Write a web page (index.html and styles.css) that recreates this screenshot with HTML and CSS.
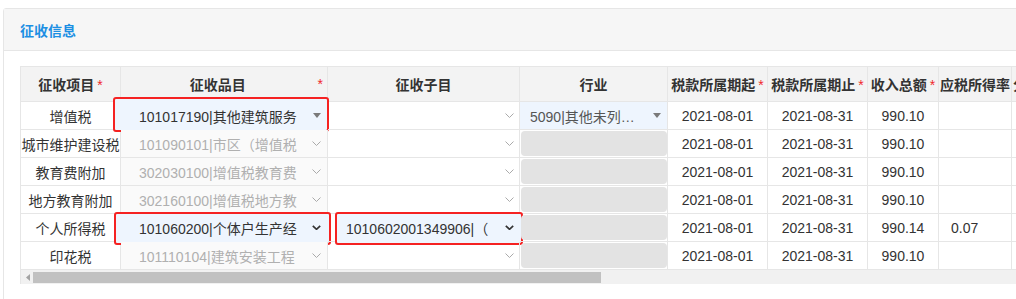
FILE: index.html
```html
<!DOCTYPE html>
<html lang="zh-CN">
<head>
    <meta charset="UTF-8">
    <meta name="viewport" content="width=device-width, initial-scale=1.0">
    <title>征收信息</title>
    <link rel="stylesheet" href="styles.css">
</head>
<body>
    <div class="panel">
        <div class="panel-head"><span class="panel-title">征收信息</span></div>
        <div class="panel-body">
            <div class="grid">
                <table class="levy-table">
                    <colgroup>
                        <col style="width:100px"><col style="width:207px"><col style="width:192px">
                        <col style="width:148px"><col style="width:100px"><col style="width:100px">
                        <col style="width:71px"><col style="width:73px"><col style="width:120px">
                    </colgroup>
                    <thead>
                        <tr>
                            <th>征收项目<span class="req">*</span></th>
                            <th><div class="th-split"><span class="th-text">征收品目</span><span class="req">*</span></div></th>
                            <th>征收子目</th>
                            <th>行业</th>
                            <th>税款所属期起<span class="req">*</span></th>
                            <th>税款所属期止<span class="req">*</span></th>
                            <th>收入总额<span class="req">*</span></th>
                            <th class="th-left">应税所得率</th>
                            <th class="th-left">分配比例</th>
                        </tr>
                    </thead>
                    <tbody>
                        <!-- 增值税 -->
                        <tr>
                            <td>增值税</td>
                            <td class="cell-sel">
                                <span class="mark mark-r1"></span>
                                <div class="sel">
                                    <span class="sel-text">101017190|其他建筑服务</span>
                                    <svg class="caret" width="8" height="5" viewBox="0 0 8 5"><path d="M0 0h8L4 5z" fill="#7a7a7a"/></svg>
                                </div>
                            </td>
                            <td class="cell-sel">
                                <div class="sel sel-sub">
                                    <span class="sel-text"></span>
                                    <svg class="caret" width="9" height="5" viewBox="0 0 9 5"><path d="M.5.5l4 4 4-4" fill="none" stroke="#aaa"/></svg>
                                </div>
                            </td>
                            <td class="cell-sel">
                                <div class="sel sel-ind sel-on">
                                    <span class="sel-text">5090|其他未列…</span>
                                    <svg class="caret" width="8" height="5" viewBox="0 0 8 5"><path d="M0 0h8L4 5z" fill="#7a7a7a"/></svg>
                                </div>
                            </td>
                            <td>2021-08-01</td>
                            <td>2021-08-31</td>
                            <td>990.10</td>
                            <td class="td-left"></td>
                            <td></td>
                        </tr>
                        <!-- 城市维护建设税 -->
                        <tr>
                            <td>城市维护建设税</td>
                            <td class="cell-sel">
                                <div class="sel sel-off">
                                    <span class="sel-text">101090101|市区（增值税</span>
                                    <svg class="caret" width="9" height="5" viewBox="0 0 9 5"><path d="M.5.5l4 4 4-4" fill="none" stroke="#aaa"/></svg>
                                </div>
                            </td>
                            <td class="cell-sel">
                                <div class="sel sel-sub">
                                    <span class="sel-text"></span>
                                    <svg class="caret" width="9" height="5" viewBox="0 0 9 5"><path d="M.5.5l4 4 4-4" fill="none" stroke="#aaa"/></svg>
                                </div>
                            </td>
                            <td class="cell-sel"><div class="locked"></div></td>
                            <td>2021-08-01</td>
                            <td>2021-08-31</td>
                            <td>990.10</td>
                            <td class="td-left"></td>
                            <td></td>
                        </tr>
                        <!-- 教育费附加 -->
                        <tr>
                            <td>教育费附加</td>
                            <td class="cell-sel">
                                <div class="sel sel-off">
                                    <span class="sel-text">302030100|增值税教育费</span>
                                    <svg class="caret" width="9" height="5" viewBox="0 0 9 5"><path d="M.5.5l4 4 4-4" fill="none" stroke="#aaa"/></svg>
                                </div>
                            </td>
                            <td class="cell-sel">
                                <div class="sel sel-sub">
                                    <span class="sel-text"></span>
                                    <svg class="caret" width="9" height="5" viewBox="0 0 9 5"><path d="M.5.5l4 4 4-4" fill="none" stroke="#aaa"/></svg>
                                </div>
                            </td>
                            <td class="cell-sel"><div class="locked"></div></td>
                            <td>2021-08-01</td>
                            <td>2021-08-31</td>
                            <td>990.10</td>
                            <td class="td-left"></td>
                            <td></td>
                        </tr>
                        <!-- 地方教育附加 -->
                        <tr>
                            <td>地方教育附加</td>
                            <td class="cell-sel">
                                <div class="sel sel-off">
                                    <span class="sel-text">302160100|增值税地方教</span>
                                    <svg class="caret" width="9" height="5" viewBox="0 0 9 5"><path d="M.5.5l4 4 4-4" fill="none" stroke="#aaa"/></svg>
                                </div>
                            </td>
                            <td class="cell-sel">
                                <div class="sel sel-sub">
                                    <span class="sel-text"></span>
                                    <svg class="caret" width="9" height="5" viewBox="0 0 9 5"><path d="M.5.5l4 4 4-4" fill="none" stroke="#aaa"/></svg>
                                </div>
                            </td>
                            <td class="cell-sel"><div class="locked"></div></td>
                            <td>2021-08-01</td>
                            <td>2021-08-31</td>
                            <td>990.10</td>
                            <td class="td-left"></td>
                            <td></td>
                        </tr>
                        <!-- 个人所得税 -->
                        <tr>
                            <td>个人所得税</td>
                            <td class="cell-sel">
                                <span class="mark mark-r5a"></span>
                                <div class="sel">
                                    <span class="sel-text">101060200|个体户生产经</span>
                                    <svg class="caret" width="9" height="5" viewBox="0 0 9 5"><path d="M.8.8l3.7 3.5 3.7-3.5" fill="none" stroke="#333" stroke-width="1.7"/></svg>
                                </div>
                            </td>
                            <td class="cell-sel">
                                <span class="mark mark-r5b"></span>
                                <div class="sel sel-sub">
                                    <span class="sel-text">1010602001349906|（</span>
                                    <svg class="caret" width="9" height="5" viewBox="0 0 9 5"><path d="M.8.8l3.7 3.5 3.7-3.5" fill="none" stroke="#333" stroke-width="1.7"/></svg>
                                </div>
                            </td>
                            <td class="cell-sel"><div class="locked"></div></td>
                            <td>2021-08-01</td>
                            <td>2021-08-31</td>
                            <td>990.14</td>
                            <td class="td-left">0.07</td>
                            <td></td>
                        </tr>
                        <!-- 印花税 -->
                        <tr>
                            <td>印花税</td>
                            <td class="cell-sel">
                                <div class="sel sel-off">
                                    <span class="sel-text">101110104|建筑安装工程</span>
                                    <svg class="caret" width="9" height="5" viewBox="0 0 9 5"><path d="M.5.5l4 4 4-4" fill="none" stroke="#aaa"/></svg>
                                </div>
                            </td>
                            <td class="cell-sel">
                                <div class="sel sel-sub">
                                    <span class="sel-text"></span>
                                    <svg class="caret" width="9" height="5" viewBox="0 0 9 5"><path d="M.5.5l4 4 4-4" fill="none" stroke="#aaa"/></svg>
                                </div>
                            </td>
                            <td class="cell-sel"><div class="locked"></div></td>
                            <td>2021-08-01</td>
                            <td>2021-08-31</td>
                            <td>990.10</td>
                            <td class="td-left"></td>
                            <td></td>
                        </tr>
                    </tbody>
                </table>
                <div class="hscroll">
                    <svg class="hscroll-arrow" width="4" height="7" viewBox="0 0 4 7"><path d="M4 0v7L0 3.5z" fill="#a3a3a3"/></svg>
                    <span class="hscroll-thumb"></span>
                </div>
            </div>
        </div>
    </div>
</body>
</html>
```

FILE: styles.css
```css
body {
    margin: 0;
    background-color: #fff;
    font-family: "Liberation Sans", "Noto Sans CJK SC", sans-serif;
    font-size: 14px;
    color: #333;
    overflow: hidden;
}

.panel {
    margin: 8px 0 0 3px;
    width: 1200px;
    min-height: 320px;
    border: 1px solid #e6e6e6;
    border-radius: 3px;
}

.panel-head {
    height: 41px;
    display: flex;
    align-items: center;
    padding-left: 16px;
    background-color: #f6f6f6;
    border-bottom: 1px solid #e6e6e6;
}

.panel-title {
    font-size: 14px;
    font-weight: bold;
    color: #1c8fe3;
}

.panel-body {
    padding: 15px 16px;
}

.grid {
    border-left: 1px solid #e6e6e6;
}

.levy-table {
    border-collapse: separate;
    border-spacing: 0;
    table-layout: fixed;
    width: 1111px;
    border-top: 1px solid #e6e6e6;
}

.levy-table th,
.levy-table td {
    padding: 0;
    border-right: 1px solid #e6e6e6;
    border-bottom: 1px solid #e6e6e6;
    text-align: center;
    white-space: nowrap;
    overflow: hidden;
    box-sizing: border-box;
}

.levy-table thead tr {
    height: 35px;
}

.levy-table tbody tr {
    height: 28px;
}

.levy-table th {
    background-color: #f3f3f3;
    font-weight: bold;
    color: #333;
}

.levy-table .th-left {
    text-align: left;
    padding-left: 1px;
}

.th-split {
    display: flex;
    align-items: center;
    padding-right: 4px;
}

.th-text {
    flex: 1;
    text-align: center;
}

.req {
    color: #f0262b;
    font-weight: normal;
    margin-left: 3px;
}

.levy-table .td-left {
    text-align: left;
    padding-left: 12px;
}

.levy-table .cell-sel {
    position: relative;
    overflow: visible;
    text-align: left;
}

/* select look-alikes */
.sel {
    position: relative;
    display: flex;
    align-items: center;
    height: 27px;
    padding: 0 6px 0 18px;
}

.sel-text {
    flex: 1;
    overflow: hidden;
    white-space: nowrap;
}

.sel-sub {
    padding-right: 5px;
}

.sel-ind {
    padding-left: 10px;
    color: #555;
}

.sel-on {
    background-color: #eef5fe;
}

.sel-off {
    background-color: #fafafa;
    color: #b0b0b0;
}

.caret {
    flex: none;
}

.locked {
    height: 25px;
    margin: 1px 0 1px 1px;
    background-color: #e3e3e3;
    border-radius: 4px;
}

.mark {
    position: absolute;
    border: 2px solid #f52222;
    border-radius: 3px;
    background-color: #eef5fe;
}

.mark-r1 {
    left: -8px;
    top: -5px;
    right: -2px;
    bottom: -3px;
}

.mark-r5a {
    left: -7px;
    top: -2px;
    right: -4px;
    bottom: -4px;
}

.mark-r5b {
    left: 7px;
    top: -2px;
    right: -4px;
    bottom: -4px;
}

.hscroll {
    display: flex;
    align-items: center;
    height: 14px;
    background-color: #f1f1f1;
}

.hscroll-arrow {
    margin-left: 5px;
}

.hscroll-thumb {
    width: 568px;
    height: 11px;
    margin-left: 3px;
    background-color: #c1c1c1;
}
```
